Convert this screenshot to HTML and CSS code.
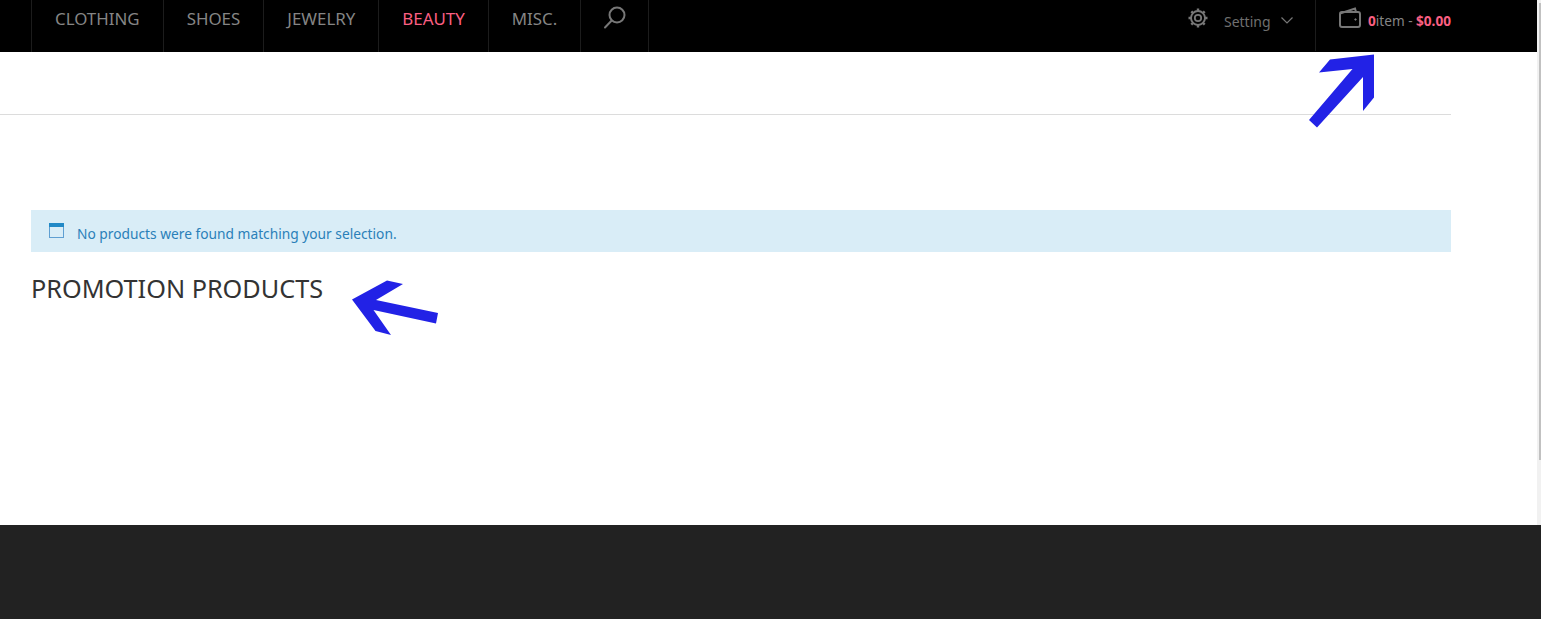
FILE: index.html
```html
<!DOCTYPE html>
<html lang="en">
<head>
<meta charset="utf-8">
<title>Promotion products</title>
<link rel="stylesheet" href="styles.css">
</head>
<body>
<div class="page">
  <header class="topbar">
    <nav class="menu">
      <a class="menu-item" href="#">CLOTHING</a>
      <a class="menu-item" href="#">SHOES</a>
      <a class="menu-item" href="#">JEWELRY</a>
      <a class="menu-item is-active" href="#">BEAUTY</a>
      <a class="menu-item" href="#">MISC.</a>
      <a class="menu-item menu-search" href="#" aria-label="Search">
        <svg class="search-icon" width="24" height="24" viewBox="0 0 24 24" fill="none" stroke="#777" stroke-width="2">
          <circle cx="14" cy="9" r="7.5"/>
          <path d="M8.7 14.500 2 21.500" stroke-linecap="round"/>
        </svg>
      </a>
    </nav>
    <div class="tools">
      <div class="setting">
        <svg class="gear" width="22" height="22" viewBox="0 0 22 22">
          <g fill="none" stroke="#777">
            <circle cx="11" cy="11" r="7" stroke-width="1.900"/>
            <circle cx="11" cy="11" r="3.200" stroke-width="1.800"/>
            <path stroke-width="2.400" d="M11 1.500v3M11 17.500v3M1.500 11h3M17.500 11h3M4.300 4.300l2.100 2.100M15.600 15.600l2.100 2.100M17.700 4.300l-2.100 2.100M6.400 15.600l-2.100 2.100"/>
          </g>
        </svg>
        <span class="setting-label">Setting</span>
        <svg class="chevron" width="12" height="7" viewBox="0 0 12 7" fill="none" stroke="#777" stroke-width="1.200">
          <path d="M.5.500 6 6l5.500-5.500"/>
        </svg>
      </div>
      <div class="cart">
        <svg class="wallet" width="22" height="21" viewBox="0 0 22 21" fill="none" stroke="#777" stroke-width="2">
          <path d="M1 6.500 16 1.500 17 5"/>
          <rect x="1" y="5" width="20" height="15" rx="2"/>
          <circle cx="16.500" cy="12.500" r=".8" fill="#777" stroke-width=".8"/>
        </svg>
        <span class="cart-text"><b class="accent">0</b>item - <b class="accent">$0.00</b></span>
      </div>
    </div>
  </header>

  <main class="content">
    <div class="rule"></div>
    <div class="notice">
      <svg class="notice-icon" width="15" height="15" viewBox="0 0 15 15">
        <rect x=".5" y=".5" width="14" height="14" fill="none" stroke="#5f9fd2"/>
        <rect x="0" y="0" width="15" height="4" fill="#2189c6"/>
      </svg>
      <span class="notice-text">No products were found matching your selection.</span>
    </div>
    <h2 class="section-title">PROMOTION PRODUCTS</h2>
  </main>

  <footer class="footer"></footer>

  <div class="scrollbar"><div class="scrollbar-thumb"></div></div>

  <svg class="annotation" width="1541" height="619" viewBox="0 0 1541 619">
    <polygon fill="#2222e6" points="1374,54.500 1330,59.500 1319,72.500 1352.500,69 1309,120 1317,127.500 1363,77 1363,111 1374,97.500"/>
    <polygon fill="#2222e6" points="352,299.500 387,280.500 403,284 376,300 438,313 436,323.500 373.500,310 391,335 375.500,331"/>
  </svg>
</div>
</body>
</html>
```
FILE: styles.css
```css
* { box-sizing: border-box; }
html, body { margin: 0; padding: 0; height: 100%; overflow: hidden; background: #fff; }
body { font-family: "Noto Sans", "Open Sans", sans-serif; }

.page {
  position: relative;
  display: flex;
  flex-direction: column;
  height: 619px;
  overflow: hidden;
}

.topbar {
  display: flex;
  justify-content: space-between;
  flex: none;
  height: 52px;
  margin-right: 4px;
  padding: 0 86px 0 31px;
  background: #000;
}

.menu { display: flex; border-right: 1px solid #1c1c1c; }
.menu-item {
  display: block;
  padding: 8px 23px 0;
  border-left: 1px solid #1c1c1c;
  color: #858585;
  font-size: 16.9px;
  line-height: 22px;
  text-decoration: none;
}
.menu-item.is-active { color: #fa5f82; }
.menu-search { padding: 6px 21px 0 22px; }
.search-icon { display: block; }

.tools { display: flex; }
.setting { display: flex; align-items: flex-start; padding-right: 22px; }
.gear { margin-top: 7px; }
.setting-label { margin: 12px 10.5px 0 14.5px; color: #6f6f6f; font-size: 14px; line-height: 20px; }
.chevron { margin-top: 17px; }

.cart { display: flex; align-items: flex-start; padding-left: 23px; border-left: 1px solid #1c1c1c; height: 51px; }
.wallet { margin-top: 7px; margin-right: 7px; }
.cart-text { margin-top: 11px; color: #858585; font-size: 13.6px; line-height: 20px; }
.accent { color: #fa5f82; font-weight: 700; }

.content {
  flex: 1;
  padding-right: 90px;
}
.rule { height: 1px; margin-top: 62px; background: #dcdcdc; }
.notice {
  display: flex;
  align-items: flex-start;
  height: 42px;
  margin: 95px 0 0 31px;
  padding: 13px 18px 0;
  background: #d9edf7;
  color: #2a80b9;
  font-size: 13.75px;
  line-height: 20px;
}
.notice-icon { margin-right: 13px; }
.notice-text { margin-top: 1px; }
.section-title {
  margin: 19px 0 0 31px;
  color: #333;
  font-size: 25.25px;
  font-weight: 400;
  line-height: 34px;
}

.footer { flex: none; height: 94px; background: #222; position: relative; z-index: 2; }

.scrollbar {
  position: absolute;
  top: 0;
  right: 0;
  bottom: 0;
  width: 4px;
  background: #f1f1f1;
}
.scrollbar-thumb {
  width: 2px;
  height: 457px;
  margin: 3px 0 0 2px;
  background: #c1c1c1;
}

.annotation { position: absolute; top: 0; left: 0; pointer-events: none; }
```
